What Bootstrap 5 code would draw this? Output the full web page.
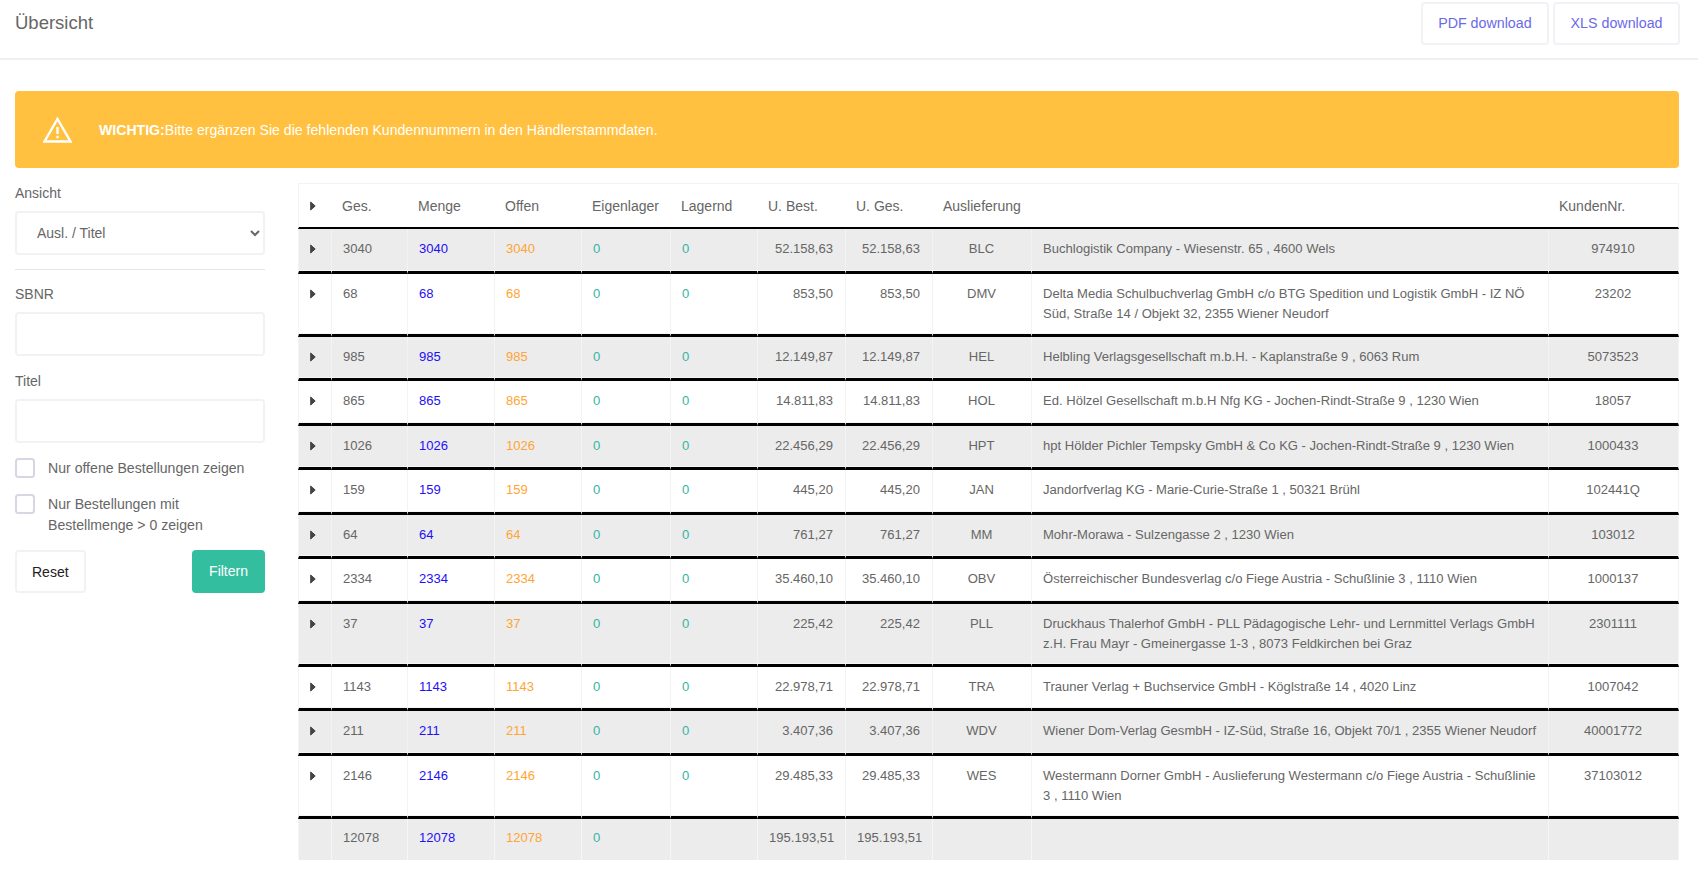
<!doctype html>
<html lang="de"><head><meta charset="utf-8"><title>Übersicht</title>
<link href="https://cdn.jsdelivr.net/npm/bootstrap@5.3.0/dist/css/bootstrap.min.css" rel="stylesheet">
<style>
body{font-family:"Liberation Sans",Arial,sans-serif;font-size:14px;color:#666;background:#fff}
.kopf{height:60px;border-bottom:2px solid #f0f0f0;padding:2px 18px 0 15px}
.kopf-titel{font-size:18.500px;font-weight:400;color:#666;margin:10px 0 0;line-height:22px}
.btn-dl{height:43px;padding:9px 15.500px 11px;font-size:14.250px;line-height:21px;color:#6a6ae8;background:#fff;border:2px solid #f2f2f6;border-radius:4px}
.warnung{margin:31px 19px 15px 15px;height:77px;background:#ffc13f;border:0;border-radius:4px;color:#fff;padding:3px 28px 0;font-size:14.100px}
.warnung svg{margin-right:27px;margin-top:-3px}
.inhalt{padding:0 19px 0 15px}
.seite{width:250px;flex:none;margin-right:33px;font-size:14.100px}
.seite label.feld{display:block;font-size:14px;line-height:21px;color:#666}
.seite .form-control,.seite .form-select{border:2px solid #f2f2f6;border-radius:4px;box-shadow:none;color:#666;font-size:14px;height:44px}
.seite .form-select{appearance:auto;background-image:none;padding:0 0 0 16px}
.abst-label{margin-bottom:7px}
.abst-feld{margin-bottom:15px}
.abst-kreuz{margin-bottom:15px;line-height:21px}
.abst-kreuz2{margin-bottom:15px;line-height:20.700px}
.trenner{border-top:1px solid #e6e6e6;opacity:1;margin:14px 0 14px}
.kreuz{width:20px;height:20px;border:2px solid #d6d6e4;border-radius:4px;flex:none;margin:0 13px 0 0!important;box-shadow:none}
.btn-reset,.btn-filter{height:43px;font-size:14px;line-height:21px;border-radius:4px;padding:10px 15px}
.btn-reset{background:#fff;border:2px solid #f2f2f6;color:#222}
.btn-filter{background:#33bf9f;border:0;color:#fff;padding:10px 17px}
.tabelle-wrap{flex:1;min-width:0}
.daten{table-layout:fixed;width:1381px;border-collapse:separate;border-spacing:0;margin:0;font-size:13.050px;line-height:20px}
.daten>thead>tr>th{font-size:14px;font-weight:400;color:#666;height:46px;padding:11px;vertical-align:middle;border:0;border-top:1px solid #f3f3f3;border-bottom:2px solid #000;background:#fff;box-shadow:none}
.daten>thead>tr>th:first-child{border-left:1px solid #f3f3f3}
.daten>thead>tr>th:last-child{border-right:1px solid #f3f3f3}
.daten>tbody>tr>td,.daten>tfoot>tr>td{height:44.5px;padding:10px 12px 10px 11px;vertical-align:top;color:#666;background:#fff;border:0;border-left:1px solid #f3f3f3;border-bottom:3px solid #000;box-shadow:inset 0 -1px 0 #f6f6f6}
.daten>tbody>tr>td:last-child,.daten>tfoot>tr>td:last-child{border-right:1px solid #f3f3f3}
.daten>tbody>tr.grau>td,.daten>tfoot>tr>td{background:#ececec}
.daten>tfoot>tr>td{border-bottom:0;height:41px;padding-top:9px;padding-bottom:9px;box-shadow:none;border-left-color:#f6f6f6}
.daten>tbody>tr>td.pfeil,.daten>thead>tr>th.pfeil{padding-left:11px;padding-right:0}
.pfeil svg{display:block}
.daten>tbody>tr>td.pfeil svg{margin-top:5px}
.daten td.rechts{text-align:right}
.daten td.mitte{text-align:center}
.daten>tbody>tr>td.adresse{padding-right:8px}
.daten>tbody>tr>td.blau,.daten>tfoot>tr>td.blau{color:#1f10f5}
.daten>tbody>tr>td.orange,.daten>tfoot>tr>td.orange{color:#ffa534}
.daten>tbody>tr>td.tuerkis,.daten>tfoot>tr>td.tuerkis{color:#35b5a5}
</style></head><body>
<div class="kopf d-flex justify-content-between align-items-start">
<h1 class="kopf-titel">Übersicht</h1>
<div class="d-flex gap-1"><a class="btn btn-dl" href="#">PDF download</a><a class="btn btn-dl" href="#">XLS download</a></div>
</div>
<div class="alert warnung d-flex align-items-center" role="alert">
<svg width="29" height="26" viewBox="0 0 29 26" fill="none"><path d="M14.5 2 27.5 24.5H1.5Z" stroke="#fff" stroke-width="2.4" stroke-linejoin="miter"/><path d="M14.5 10v7" stroke="#fff" stroke-width="2.4"/><path d="M14.5 18.800v2.500" stroke="#fff" stroke-width="2.4"/></svg>
<div><strong>WICHTIG:</strong>Bitte ergänzen Sie die fehlenden Kundennummern in den Händlerstammdaten.</div>
</div>
<div class="inhalt d-flex align-items-start">
<aside class="seite">
<label class="feld abst-label" for="a">Ansicht</label>
<select class="form-select" id="a"><option>Ausl. / Titel</option></select>
<hr class="trenner">
<label class="feld abst-label" for="s">SBNR</label>
<input class="form-control abst-feld" id="s" type="text">
<label class="feld abst-label" for="t">Titel</label>
<input class="form-control abst-feld" id="t" type="text">
<div class="d-flex abst-kreuz"><input class="form-check-input kreuz" type="checkbox" id="c1"><label for="c1">Nur offene Bestellungen zeigen</label></div>
<div class="d-flex abst-kreuz2"><input class="form-check-input kreuz" type="checkbox" id="c2"><label for="c2">Nur Bestellungen mit<br>Bestellmenge &gt; 0 zeigen</label></div>
<div class="d-flex justify-content-between"><button class="btn btn-reset" type="button">Reset</button><button class="btn btn-filter" type="button">Filtern</button></div>
</aside>
<div class="tabelle-wrap">
<table class="table daten">
<colgroup><col style="width:33px"><col style="width:76px"><col style="width:87px"><col style="width:87px"><col style="width:89px"><col style="width:87px"><col style="width:88px"><col style="width:87px"><col style="width:99px"><col style="width:517px"><col style="width:131px"></colgroup>
<thead><tr><th class="pfeil"><svg width="6" height="10" viewBox="0 0 6 10"><path d="M.7 1 5.200 5 .7 9Z" fill="#444" stroke="#444" stroke-linejoin="round"/></svg></th><th>Ges.</th><th>Menge</th><th>Offen</th><th>Eigenlager</th><th>Lagernd</th><th>U. Best.</th><th>U. Ges.</th><th>Auslieferung</th><th></th><th>KundenNr.</th></tr></thead>
<tbody id="zeilen">
<tr class="grau"><td class="pfeil"><svg width="6" height="10" viewBox="0 0 6 10"><path d="M.7 1 5.200 5 .7 9Z" fill="#444" stroke="#444" stroke-linejoin="round"/></svg></td><td>3040</td><td class="blau">3040</td><td class="orange">3040</td><td class="tuerkis">0</td><td class="tuerkis">0</td><td class="rechts">52.158,63</td><td class="rechts">52.158,63</td><td class="mitte">BLC</td><td class="adresse">Buchlogistik Company - Wiesenstr. 65 , 4600 Wels</td><td class="mitte">974910</td></tr>
<tr><td class="pfeil"><svg width="6" height="10" viewBox="0 0 6 10"><path d="M.7 1 5.200 5 .7 9Z" fill="#444" stroke="#444" stroke-linejoin="round"/></svg></td><td>68</td><td class="blau">68</td><td class="orange">68</td><td class="tuerkis">0</td><td class="tuerkis">0</td><td class="rechts">853,50</td><td class="rechts">853,50</td><td class="mitte">DMV</td><td class="adresse">Delta Media Schulbuchverlag GmbH c/o BTG Spedition und Logistik GmbH - IZ NÖ Süd, Straße 14 / Objekt 32, 2355 Wiener Neudorf</td><td class="mitte">23202</td></tr>
<tr class="grau"><td class="pfeil"><svg width="6" height="10" viewBox="0 0 6 10"><path d="M.7 1 5.200 5 .7 9Z" fill="#444" stroke="#444" stroke-linejoin="round"/></svg></td><td>985</td><td class="blau">985</td><td class="orange">985</td><td class="tuerkis">0</td><td class="tuerkis">0</td><td class="rechts">12.149,87</td><td class="rechts">12.149,87</td><td class="mitte">HEL</td><td class="adresse">Helbling Verlagsgesellschaft m.b.H. - Kaplanstraße 9 , 6063 Rum</td><td class="mitte">5073523</td></tr>
<tr><td class="pfeil"><svg width="6" height="10" viewBox="0 0 6 10"><path d="M.7 1 5.200 5 .7 9Z" fill="#444" stroke="#444" stroke-linejoin="round"/></svg></td><td>865</td><td class="blau">865</td><td class="orange">865</td><td class="tuerkis">0</td><td class="tuerkis">0</td><td class="rechts">14.811,83</td><td class="rechts">14.811,83</td><td class="mitte">HOL</td><td class="adresse">Ed. Hölzel Gesellschaft m.b.H Nfg KG - Jochen-Rindt-Straße 9 , 1230 Wien</td><td class="mitte">18057</td></tr>
<tr class="grau"><td class="pfeil"><svg width="6" height="10" viewBox="0 0 6 10"><path d="M.7 1 5.200 5 .7 9Z" fill="#444" stroke="#444" stroke-linejoin="round"/></svg></td><td>1026</td><td class="blau">1026</td><td class="orange">1026</td><td class="tuerkis">0</td><td class="tuerkis">0</td><td class="rechts">22.456,29</td><td class="rechts">22.456,29</td><td class="mitte">HPT</td><td class="adresse">hpt Hölder Pichler Tempsky GmbH &amp; Co KG - Jochen-Rindt-Straße 9 , 1230 Wien</td><td class="mitte">1000433</td></tr>
<tr><td class="pfeil"><svg width="6" height="10" viewBox="0 0 6 10"><path d="M.7 1 5.200 5 .7 9Z" fill="#444" stroke="#444" stroke-linejoin="round"/></svg></td><td>159</td><td class="blau">159</td><td class="orange">159</td><td class="tuerkis">0</td><td class="tuerkis">0</td><td class="rechts">445,20</td><td class="rechts">445,20</td><td class="mitte">JAN</td><td class="adresse">Jandorfverlag KG - Marie-Curie-Straße 1 , 50321 Brühl</td><td class="mitte">102441Q</td></tr>
<tr class="grau"><td class="pfeil"><svg width="6" height="10" viewBox="0 0 6 10"><path d="M.7 1 5.200 5 .7 9Z" fill="#444" stroke="#444" stroke-linejoin="round"/></svg></td><td>64</td><td class="blau">64</td><td class="orange">64</td><td class="tuerkis">0</td><td class="tuerkis">0</td><td class="rechts">761,27</td><td class="rechts">761,27</td><td class="mitte">MM</td><td class="adresse">Mohr-Morawa - Sulzengasse 2 , 1230 Wien</td><td class="mitte">103012</td></tr>
<tr><td class="pfeil"><svg width="6" height="10" viewBox="0 0 6 10"><path d="M.7 1 5.200 5 .7 9Z" fill="#444" stroke="#444" stroke-linejoin="round"/></svg></td><td>2334</td><td class="blau">2334</td><td class="orange">2334</td><td class="tuerkis">0</td><td class="tuerkis">0</td><td class="rechts">35.460,10</td><td class="rechts">35.460,10</td><td class="mitte">OBV</td><td class="adresse">Österreichischer Bundesverlag c/o Fiege Austria - Schußlinie 3 , 1110 Wien</td><td class="mitte">1000137</td></tr>
<tr class="grau"><td class="pfeil"><svg width="6" height="10" viewBox="0 0 6 10"><path d="M.7 1 5.200 5 .7 9Z" fill="#444" stroke="#444" stroke-linejoin="round"/></svg></td><td>37</td><td class="blau">37</td><td class="orange">37</td><td class="tuerkis">0</td><td class="tuerkis">0</td><td class="rechts">225,42</td><td class="rechts">225,42</td><td class="mitte">PLL</td><td class="adresse">Druckhaus Thalerhof GmbH - PLL Pädagogische Lehr- und Lernmittel Verlags GmbH z.H. Frau Mayr - Gmeinergasse 1-3 , 8073 Feldkirchen bei Graz</td><td class="mitte">2301111</td></tr>
<tr><td class="pfeil"><svg width="6" height="10" viewBox="0 0 6 10"><path d="M.7 1 5.200 5 .7 9Z" fill="#444" stroke="#444" stroke-linejoin="round"/></svg></td><td>1143</td><td class="blau">1143</td><td class="orange">1143</td><td class="tuerkis">0</td><td class="tuerkis">0</td><td class="rechts">22.978,71</td><td class="rechts">22.978,71</td><td class="mitte">TRA</td><td class="adresse">Trauner Verlag + Buchservice GmbH - Köglstraße 14 , 4020 Linz</td><td class="mitte">1007042</td></tr>
<tr class="grau"><td class="pfeil"><svg width="6" height="10" viewBox="0 0 6 10"><path d="M.7 1 5.200 5 .7 9Z" fill="#444" stroke="#444" stroke-linejoin="round"/></svg></td><td>211</td><td class="blau">211</td><td class="orange">211</td><td class="tuerkis">0</td><td class="tuerkis">0</td><td class="rechts">3.407,36</td><td class="rechts">3.407,36</td><td class="mitte">WDV</td><td class="adresse">Wiener Dom-Verlag GesmbH - IZ-Süd, Straße 16, Objekt 70/1 , 2355 Wiener Neudorf</td><td class="mitte">40001772</td></tr>
<tr><td class="pfeil"><svg width="6" height="10" viewBox="0 0 6 10"><path d="M.7 1 5.200 5 .7 9Z" fill="#444" stroke="#444" stroke-linejoin="round"/></svg></td><td>2146</td><td class="blau">2146</td><td class="orange">2146</td><td class="tuerkis">0</td><td class="tuerkis">0</td><td class="rechts">29.485,33</td><td class="rechts">29.485,33</td><td class="mitte">WES</td><td class="adresse">Westermann Dorner GmbH - Auslieferung Westermann c/o Fiege Austria - Schußlinie 3 , 1110 Wien</td><td class="mitte">37103012</td></tr>
</tbody>
<tfoot><tr><td></td><td>12078</td><td class="blau">12078</td><td class="orange">12078</td><td class="tuerkis">0</td><td></td><td class="rechts">195.193,51</td><td class="rechts">195.193,51</td><td></td><td></td><td></td></tr></tfoot>
</table>
</div>
</div>
<script src="https://cdn.jsdelivr.net/npm/bootstrap@5.3.0/dist/js/bootstrap.bundle.min.js"></script>
</body></html>
